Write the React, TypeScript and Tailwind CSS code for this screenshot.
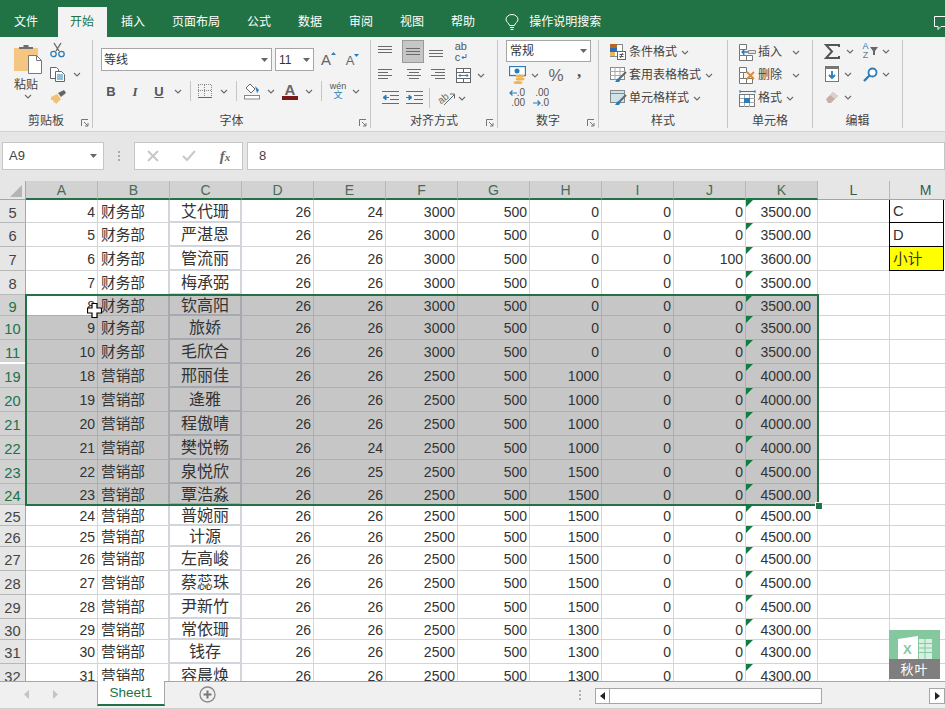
import type { ReactNode } from "react";

const cjk = "font-['Liberation_Sans','Noto_Sans_CJK_SC',sans-serif]";

const tabs = ["插入", "页面布局", "公式", "数据", "审阅", "视图", "帮助"];

type Row = { n: number; h: string; v: (string | number)[]; sel?: boolean; gap?: boolean };

const base = (a: number, dept: string, name: string, e: number, f: number, h: number, j: number, k: string) => [a, dept, name, 26, e, f, 500, h, 0, j, k];

const rows: Row[] = [
  { n: 5, h: "h-[23px]", v: base(4, "财务部", "艾代珊", 24, 3000, 0, 0, "3500.00") },
  { n: 6, h: "h-[24px]", v: base(5, "财务部", "严湛恩", 26, 3000, 0, 0, "3500.00") },
  { n: 7, h: "h-[24px]", v: base(6, "财务部", "管流丽", 26, 3000, 0, 100, "3600.00") },
  { n: 8, h: "h-[24px]", v: base(7, "财务部", "梅承弼", 26, 3000, 0, 0, "3500.00") },
  { n: 9, h: "h-[21px]", sel: true, v: base(8, "财务部", "钦高阳", 26, 3000, 0, 0, "3500.00") },
  { n: 10, h: "h-[24px]", sel: true, v: base(9, "财务部", "旅娇", 26, 3000, 0, 0, "3500.00") },
  { n: 11, h: "h-[24px]", sel: true, gap: true, v: base(10, "财务部", "毛欣合", 26, 3000, 0, 0, "3500.00") },
  { n: 19, h: "h-[24px]", sel: true, v: base(18, "营销部", "邢丽佳", 26, 2500, 1000, 0, "4000.00") },
  { n: 20, h: "h-[24px]", sel: true, v: base(19, "营销部", "逄雅", 26, 2500, 1000, 0, "4000.00") },
  { n: 21, h: "h-[24px]", sel: true, v: base(20, "营销部", "程傲晴", 26, 2500, 1000, 0, "4000.00") },
  { n: 22, h: "h-[24px]", sel: true, v: base(21, "营销部", "樊悦畅", 24, 2500, 1000, 0, "4000.00") },
  { n: 23, h: "h-[24px]", sel: true, v: base(22, "营销部", "泉悦欣", 25, 2500, 1500, 0, "4500.00") },
  { n: 24, h: "h-[21px]", sel: true, v: base(23, "营销部", "覃浩淼", 26, 2500, 1500, 0, "4500.00") },
  { n: 25, h: "h-[21px]", v: base(24, "营销部", "普婉丽", 26, 2500, 1500, 0, "4500.00") },
  { n: 26, h: "h-[21px]", v: base(25, "营销部", "计源", 26, 2500, 1500, 0, "4500.00") },
  { n: 27, h: "h-[24px]", v: base(26, "营销部", "左高峻", 26, 2500, 1500, 0, "4500.00") },
  { n: 28, h: "h-[24px]", v: base(27, "营销部", "蔡蕊珠", 26, 2500, 1500, 0, "4500.00") },
  { n: 29, h: "h-[24px]", v: base(28, "营销部", "尹新竹", 26, 2500, 1500, 0, "4500.00") },
  { n: 30, h: "h-[21px]", v: base(29, "营销部", "常依珊", 26, 2500, 1300, 0, "4300.00") },
  { n: 31, h: "h-[24px]", v: base(30, "营销部", "钱存", 26, 2500, 1300, 0, "4300.00") },
  { n: 32, h: "h-[24px]", v: base(31, "营销部", "容晨焕", 26, 2500, 1300, 0, "4300.00") },
];

function Chev({ className = "" }: { className?: string }) {
  return (
    <svg width="8" height="5" viewBox="0 0 8 5" className={className}>
      <path d="M1 1l3 3 3-3" fill="none" stroke="#6a6a6a" strokeWidth="1.1" />
    </svg>
  );
}

function Caret({ className = "" }: { className?: string }) {
  return (
    <svg width="7" height="4" viewBox="0 0 7 4" className={className}>
      <path d="M0 0h7L3.5 4z" fill="#666" />
    </svg>
  );
}

function Lines({ l, w = 16, h = 14 }: { l: [number, number, number][]; w?: number; h?: number }) {
  return (
    <svg width={w} height={h} viewBox={`0 0 ${w} ${h}`}>
      {l.map(([a, b, y], i) => (
        <path key={i} d={`M${a} ${y + 0.5}H${b}`} stroke="#6b6b6b" strokeWidth="1" />
      ))}
    </svg>
  );
}

function Launcher() {
  return (
    <svg width="8" height="8" viewBox="0 0 8 8" className="absolute right-[3px] bottom-[1px]">
      <path d="M.5 7V.5H7M3 3l4 4M4 7h3V4" fill="none" stroke="#777" strokeWidth="1" />
    </svg>
  );
}

function Group({ w, label, launcher, children }: { w: string; label: string; launcher?: boolean; children: ReactNode }) {
  return (
    <div className={`relative flex flex-col shrink-0 h-[88px] border-r border-[#c6c6c6] ${w}`}>
      <div className="flex-1 min-h-0">{children}</div>
      <div className="h-[14px] flex items-center justify-center text-[12px] leading-none text-[#444]">{label}</div>
      {launcher && <Launcher />}
    </div>
  );
}

function Slot({ w = "w-[24px]", children }: { w?: string; children: ReactNode }) {
  return <div className={`flex items-center justify-center shrink-0 ${w}`}>{children}</div>;
}

function Sep({ className = "" }: { className?: string }) {
  return <div className={`w-px h-[20px] bg-[#c6c6c6] shrink-0 ${className}`} />;
}

function PasteIcon() {
  return (
    <svg width="29" height="30" viewBox="0 0 29 30">
      <rect x="0" y="4" width="24" height="23" fill="#f5c681" />
      <path d="M5 5V3h4.500V1h5v2H19v2z" fill="#6f6f6f" />
      <path d="M14.500 11.500h8l5 5v13h-13z" fill="#fff" stroke="#777" />
      <path d="M22.500 11.500v5h5" fill="none" stroke="#777" />
    </svg>
  );
}

function ScissorsIcon() {
  return (
    <svg width="15" height="16" viewBox="0 0 15 16">
      <path d="M4 1l5 8M11 1L6 9" stroke="#6b6b6b" strokeWidth="1.4" fill="none" />
      <circle cx="3.500" cy="12" r="2.700" fill="none" stroke="#2b7cb8" strokeWidth="1.300" />
      <circle cx="11.500" cy="12" r="2.700" fill="none" stroke="#2b7cb8" strokeWidth="1.300" />
    </svg>
  );
}

function CopyIcon() {
  return (
    <svg width="16" height="15" viewBox="0 0 16 15">
      <path d="M.5.500h6l2 2v9h-8z" fill="#fff" stroke="#666" />
      <path d="M5.500 4.500h6l3 3v7h-9z" fill="#fff" stroke="#666" />
      <path d="M7 8h6M7 10h6M7 12h6" stroke="#2b7cb8" />
    </svg>
  );
}

function BrushIcon() {
  return (
    <svg width="17" height="15" viewBox="0 0 17 15">
      <path d="M1 7l6-3 4 5-5 5-1-2-1 1-1-3-2 0z" fill="#f3bf74" />
      <path d="M8 3l3 4 5-4-2-3z" fill="#666" />
    </svg>
  );
}

function BorderIcon() {
  return (
    <svg width="14" height="15" viewBox="0 0 14 15">
      <path d="M.5 1v11M6.500 1v11M13.500 1v11M0 .5h14M0 6.500h14" stroke="#8a8a8a" strokeDasharray="1 1" fill="none" />
      <path d="M0 13.500h14" stroke="#666" />
    </svg>
  );
}

function FillIcon() {
  return (
    <svg width="16" height="17" viewBox="0 0 16 17">
      <path d="M6 1l5 5-4 4-5-5z" fill="#fff" stroke="#666" />
      <path d="M11 3l4 4-2 3z" fill="#2b7cb8" />
      <rect x=".5" y="12.500" width="15" height="3.500" fill="#fff" stroke="#888" />
    </svg>
  );
}

function WrapIcon() {
  return (
    <div className="flex flex-col items-start leading-[11px] text-[11px] text-[#555] font-['Liberation_Sans']">
      <span>ab</span>
      <span className="flex items-center">
        c
        <svg width="6" height="6" viewBox="0 0 6 6" className="ml-px">
          <path d="M5 0v3.500H1M2.500 2L1 3.500 2.500 5" fill="none" stroke="#2b7cb8" />
        </svg>
      </span>
    </div>
  );
}

function MergeIcon() {
  return (
    <svg width="15" height="15" viewBox="0 0 15 15">
      <rect x=".5" y=".5" width="14" height="14" fill="#fff" stroke="#666" />
      <path d="M0 4.500h15M0 10.500h15M7.500 0v4M7.500 11v4" stroke="#666" />
      <path d="M3 7.500h9M4.500 6L3 7.500 4.500 9M10.500 6L12 7.500 10.500 9" stroke="#2b7cb8" fill="none" />
    </svg>
  );
}

function IndentIcon({ flip = false }: { flip?: boolean }) {
  return (
    <svg width="17" height="14" viewBox="0 0 17 14">
      <path d="M0 .5h17M8 4.500h9M8 8.500h9M0 12.500h17" stroke="#6b6b6b" />
      <path d={flip ? "M0 6.500h5M3 4l3 2.500L3 9z" : "M2 6.500h5M4 4L1 6.500 4 9z"} stroke="#2b7cb8" fill="#2b7cb8" />
    </svg>
  );
}

function OrientIcon() {
  return (
    <svg width="18" height="16" viewBox="0 0 18 16">
      <text x="1" y="12" fontSize="10" fill="#666" transform="rotate(-40 6 9)" fontFamily="Liberation Sans">ab</text>
      <path d="M7 15L17 5M13 4h4.500v4.500" stroke="#666" fill="none" />
    </svg>
  );
}

function MoneyIcon() {
  return (
    <svg width="17" height="19" viewBox="0 0 17 19">
      <rect x=".5" y=".5" width="16" height="9" fill="#fff" stroke="#2b7cb8" strokeWidth="1.300" />
      <circle cx="8" cy="5" r="2.500" fill="#2b7cb8" />
      <ellipse cx="11" cy="10" rx="4.500" ry="1.500" fill="#f0b455" />
      <ellipse cx="11" cy="13" rx="4.500" ry="1.500" fill="#f0b455" />
      <ellipse cx="9" cy="16.500" rx="4.500" ry="1.500" fill="#f0b455" />
    </svg>
  );
}

function DecimalIcon({ more = false }: { more?: boolean }) {
  const cls = "text-[10px] leading-[10px] text-[#555] font-['Liberation_Sans']";
  return more ? (
    <div className={`flex flex-col items-end ${cls}`}>
      <span>.00</span>
      <span className="flex items-center">
        <svg width="8" height="6" viewBox="0 0 8 6"><path d="M0 3h7M4.500.5L7 3 4.500 5.500" fill="none" stroke="#2b7cb8" strokeWidth="1.200" /></svg>
        .0
      </span>
    </div>
  ) : (
    <div className={`flex flex-col items-end ${cls}`}>
      <span className="flex items-center">
        <svg width="8" height="6" viewBox="0 0 8 6"><path d="M8 3H1M3.500.5L1 3l2.500 2.500" fill="none" stroke="#2b7cb8" strokeWidth="1.200" /></svg>
        .0
      </span>
      <span>.00</span>
    </div>
  );
}

function CondIcon() {
  return (
    <svg width="16" height="16" viewBox="0 0 16 16">
      <rect x=".5" y=".5" width="12" height="12" fill="#fff" stroke="#888" />
      <rect x="0" y="0" width="7" height="4" fill="#b4691f" />
      <rect x="0" y="4" width="7" height="4" fill="#2b6cb8" />
      <rect x="0" y="8" width="5" height="4" fill="#f0b455" />
      <rect x="7.500" y="7.500" width="8" height="8" fill="#fff" stroke="#666" />
      <path d="M9.500 10.500h4M9.500 12.500h4M12.500 9l-2 5" stroke="#555" />
    </svg>
  );
}

function TableIcon({ plain = false }: { plain?: boolean }) {
  return (
    <svg width="17" height="17" viewBox="0 0 17 17">
      <rect x=".5" y=".5" width="14" height="12" fill={plain ? "#cfe3ea" : "#fff"} stroke="#888" />
      {!plain && <path d="M5 0v13M10 0v13M0 4.500h15M0 8.500h15" stroke="#aaa" />}
      {plain && <path d="M0 3.500h15" stroke="#888" />}
      <path d="M16 5l-6 6" stroke="#666" strokeWidth="2" />
      <path d="M7 12l3-2 1 2-2 3H5z" fill="#2b7cb8" />
    </svg>
  );
}

function CellOpIcon({ kind }: { kind: "ins" | "del" }) {
  return (
    <svg width="17" height="17" viewBox="0 0 17 17">
      <path d="M.5.500h7v5h-7zM.5 11.500h7v5h-7zM7.500 11.500h6v5h-6z" fill="#fff" stroke="#777" />
      <path d="M.5 5.500h4v6h-4z" fill="#fff" stroke="#777" />
      {kind === "ins" ? (
        <>
          <path d="M9.500 6.500h7v3h-7z" fill="#dfe7ee" stroke="#888" />
          <path d="M9 8H3M5.500 5.500L3 8l2.500 2.500" stroke="#2b7cb8" strokeWidth="1.300" fill="none" />
        </>
      ) : (
        <path d="M8 5l7 7M15 5l-7 7" stroke="#d98b3a" strokeWidth="1.800" />
      )}
    </svg>
  );
}

function FormatIcon() {
  return (
    <svg width="17" height="17" viewBox="0 0 17 17">
      <path d="M1 1.500h15M1 0v3M16 0v3" stroke="#2b7cb8" />
      <rect x=".5" y="4.500" width="15" height="12" fill="#fff" stroke="#777" />
      <path d="M5.500 5v12M10.500 5v12M1 8.500h15M1 12.500h15" stroke="#aaa" />
      <rect x="5" y="8" width="6" height="5" fill="#2b7cb8" />
    </svg>
  );
}

function SigmaIcon() {
  return (
    <svg width="16" height="15" viewBox="0 0 16 15">
      <path d="M15 3V1H2l6 6.500L2 14h13v-2" fill="none" stroke="#555" strokeWidth="2" />
    </svg>
  );
}

function SortIcon() {
  return (
    <div className="flex items-center">
      <div className="flex flex-col items-center leading-[9px] text-[9px] font-['Liberation_Sans']">
        <span className="text-[#2b7cb8]">A</span>
        <span className="text-[#777]">Z</span>
      </div>
      <svg width="8" height="8" viewBox="0 0 8 8" className="ml-px">
        <path d="M0 0h8L5 4v4H3V4z" fill="#666" />
      </svg>
    </div>
  );
}

function FillDownIcon() {
  return (
    <svg width="14" height="16" viewBox="0 0 14 16">
      <rect x=".5" y=".5" width="13" height="15" fill="#fff" stroke="#777" />
      <rect x="0" y="0" width="14" height="3" fill="#777" />
      <path d="M7 5v7M4 9l3 3 3-3" stroke="#2b7cb8" strokeWidth="1.800" fill="none" />
    </svg>
  );
}

function FindIcon() {
  return (
    <svg width="15" height="15" viewBox="0 0 15 15">
      <circle cx="9.500" cy="5.500" r="4" fill="#fff" stroke="#2b7cb8" strokeWidth="1.800" />
      <path d="M6.500 8.500L1 14" stroke="#2b7cb8" strokeWidth="2.400" />
    </svg>
  );
}

function EraserIcon() {
  return (
    <svg width="14" height="13" viewBox="0 0 14 13">
      <path d="M1 8l7-7 5 4-7 7H3z" fill="#c9aea6" />
      <path d="M8 1l5 4-3 3-5-4z" fill="#ddd0cc" />
    </svg>
  );
}

function Ribbon() {
  return (
    <div className={`flex h-[95px] pt-[3px] bg-[#f3f3f3] border-b border-[#d2d2d2] overflow-hidden ${cjk}`}>
      <Group w="w-[93px]" label="剪贴板" launcher>
        <div className="flex">
          <div className="ml-[14px] w-[29px] flex flex-col items-start pt-[4px]">
            <PasteIcon />
            <span className="mt-[4px] text-[12px] leading-[14px] text-[#444]">粘贴</span>
            <Chev className="ml-[10px] mt-[2px]" />
          </div>
          <div className="ml-[7px] flex flex-col items-start pt-[2px]">
            <ScissorsIcon />
            <div className="flex items-center mt-[9px]">
              <CopyIcon />
              <Chev className="ml-[7px]" />
            </div>
            <div className="mt-[8px]"><BrushIcon /></div>
          </div>
        </div>
      </Group>

      <Group w="w-[278px]" label="字体" launcher>
        <div className="flex items-center mt-[8px] ml-[8px]">
          <div className="flex items-center justify-between w-[171px] h-[23px] bg-white border border-[#a6a6a6] pl-[2px] pr-[3px] text-[12px] text-[#333]">
            等线
            <Caret />
          </div>
          <div className="flex items-center justify-between ml-[3px] w-[39px] h-[23px] bg-white border border-[#a6a6a6] pl-[3px] pr-[3px] text-[12px] text-[#333]">
            11
            <Caret />
          </div>
          <div className="ml-[3px] flex items-start w-[23px] justify-center text-[15px] leading-none text-[#666] font-['Liberation_Sans']">
            A
            <svg width="5" height="3" viewBox="0 0 5 3"><path d="M0 3h5L2.500 0z" fill="#2b7cb8" /></svg>
          </div>
          <div className="flex items-start w-[25px] justify-center text-[13px] leading-none text-[#666] font-['Liberation_Sans'] pt-[2px]">
            A
            <svg width="5" height="3" viewBox="0 0 5 3"><path d="M0 0h5L2.500 3z" fill="#2b7cb8" /></svg>
          </div>
        </div>
        <div className="flex items-center mt-[10px] ml-[6px] h-[20px] font-['Liberation_Sans'] text-[#555]">
          <Slot><b className="text-[13px] leading-none">B</b></Slot>
          <Slot><i className="text-[13px] leading-none font-['Liberation_Serif'] font-bold">I</i></Slot>
          <Slot><span className="text-[13px] leading-none font-bold underline">U</span></Slot>
          <Slot w="w-[14px]"><Chev /></Slot>
          <Sep className="ml-[5px]" />
          <div className="ml-[2px]"><Slot><BorderIcon /></Slot></div>
          <Slot w="w-[14px]"><Chev /></Slot>
          <Sep className="ml-[5px]" />
          <div className="ml-[3px]"><Slot><FillIcon /></Slot></div>
          <Slot w="w-[14px]"><Chev /></Slot>
          <Slot>
            <div className="flex flex-col items-center">
              <span className="text-[15px] leading-[13px] font-bold text-[#666]">A</span>
              <div className="w-[16px] h-[4px] bg-[#7b1818]" />
            </div>
          </Slot>
          <Slot w="w-[14px]"><Chev /></Slot>
          <Sep className="ml-[5px]" />
          <div className="ml-[4px]">
            <Slot>
              <div className="flex flex-col items-center">
                <span className="text-[9px] leading-[9px] text-[#555]">wén</span>
                <span className={`text-[9px] leading-[9px] text-[#2b7cb8] ${cjk}`}>文</span>
              </div>
            </Slot>
          </div>
          <Slot w="w-[12px]"><Chev /></Slot>
        </div>
      </Group>

      <Group w="w-[127px]" label="对齐方式" launcher>
        <div className="flex items-center ml-[2px] h-[23px]">
          <Slot><div className="-mt-[4px]"><Lines l={[[1, 15, 3], [1, 15, 6], [1, 15, 9]]} /></div></Slot>
          <div className="ml-[5px] flex items-center justify-center w-[22px] h-[23px] bg-[#c6c6c6] border border-[#9a9a9a]">
            <Lines l={[[1, 15, 3], [1, 15, 6], [1, 15, 9]]} />
          </div>
          <Slot><div className="mt-[5px]"><Lines l={[[1, 15, 3], [1, 15, 6], [1, 15, 9]]} /></div></Slot>
          <div className="ml-[1px]"><Slot><WrapIcon /></Slot></div>
        </div>
        <div className="flex items-center ml-[2px] mt-[2px] h-[20px]">
          <Slot><Lines l={[[1, 15, 1], [1, 11, 4], [1, 15, 7], [1, 11, 10]]} /></Slot>
          <div className="ml-[5px]"><Slot><Lines l={[[1, 15, 1], [3, 13, 4], [1, 15, 7], [3, 13, 10]]} /></Slot></div>
          <Slot><Lines l={[[1, 15, 1], [5, 15, 4], [1, 15, 7], [5, 15, 10]]} /></Slot>
          <div className="ml-[1px]"><Slot><MergeIcon /></Slot></div>
          <Slot w="w-[12px]"><Chev /></Slot>
        </div>
        <div className="flex items-center ml-[7px] mt-[3px] h-[20px]">
          <Slot><IndentIcon /></Slot>
          <Slot><IndentIcon flip /></Slot>
          <Sep className="ml-[3px]" />
          <div className="ml-[4px]"><Slot><OrientIcon /></Slot></div>
          <Slot w="w-[8px]"><Chev /></Slot>
        </div>
      </Group>

      <Group w="w-[101px]" label="数字" launcher>
        <div className="flex items-center justify-between ml-[8px] w-[85px] h-[22px] bg-white border border-[#a6a6a6] pl-[3px] pr-[3px] text-[12px] text-[#333]">
          常规
          <Caret />
        </div>
        <div className="flex items-center ml-[7px] mt-[3px] h-[20px]">
          <Slot><MoneyIcon /></Slot>
          <Slot w="w-[12px]"><Chev /></Slot>
          <div className="ml-[3px]">
            <Slot><span className="text-[17px] leading-none text-[#666] font-['Liberation_Sans']">%</span></Slot>
          </div>
          <Slot w="w-[22px]"><span className="-mt-[8px] text-[17px] leading-none font-bold text-[#555] font-['Liberation_Serif']">,</span></Slot>
        </div>
        <div className="flex items-center ml-[7px] mt-[3px] h-[20px]">
          <Slot><DecimalIcon /></Slot>
          <Slot><DecimalIcon more /></Slot>
        </div>
      </Group>

      <Group w="w-[129px]" label="样式">
        <div className="flex flex-col gap-[3px] pl-[11px] pt-[2px] text-[12px] text-[#444]">
          <div className="flex items-center h-[20px]"><div className="w-[16px]"><CondIcon /></div><span className="ml-[3px]">条件格式</span><Chev className="ml-[4px]" /></div>
          <div className="flex items-center h-[20px]"><div className="w-[16px]"><TableIcon /></div><span className="ml-[3px]">套用表格格式</span><Chev className="ml-[4px]" /></div>
          <div className="flex items-center h-[20px]"><div className="w-[16px]"><TableIcon plain /></div><span className="ml-[3px]">单元格样式</span><Chev className="ml-[4px]" /></div>
        </div>
      </Group>

      <Group w="w-[85px]" label="单元格">
        <div className="flex flex-col gap-[3px] pl-[11px] pt-[2px] text-[12px] text-[#444]">
          <div className="flex items-center h-[20px]"><CellOpIcon kind="ins" /><span className="ml-[2px]">插入</span><Chev className="ml-[10px]" /></div>
          <div className="flex items-center h-[20px]"><CellOpIcon kind="del" /><span className="ml-[2px]">删除</span><Chev className="ml-[10px]" /></div>
          <div className="flex items-center h-[20px]"><FormatIcon /><span className="ml-[2px]">格式</span><Chev className="ml-[4px]" /></div>
        </div>
      </Group>

      <Group w="w-[90px]" label="编辑">
        <div className="flex flex-col gap-[3px] pl-[9px] pt-[1px]">
          <div className="flex items-center h-[20px]">
            <Slot w="w-[20px]"><SigmaIcon /></Slot><Chev className="ml-[4px]" />
            <div className="ml-[7px]"><Slot w="w-[18px]"><SortIcon /></Slot></div><Chev className="ml-[3px]" />
          </div>
          <div className="flex items-center h-[20px]">
            <Slot w="w-[20px]"><FillDownIcon /></Slot><Chev className="ml-[2px]" />
            <div className="ml-[9px]"><Slot w="w-[18px]"><FindIcon /></Slot></div><Chev className="ml-[3px]" />
          </div>
          <div className="flex items-center h-[20px]">
            <Slot w="w-[20px]"><EraserIcon /></Slot><Chev className="ml-[2px]" />
          </div>
        </div>
      </Group>
    </div>
  );
}

function FormulaBar() {
  return (
    <div className="flex items-start h-[49px] pt-[10px] bg-[#e6e6e6] font-['Liberation_Sans']">
      <div className="ml-[2px] flex items-center justify-between w-[102px] h-[28px] bg-white border border-[#c6c6c6] pl-[6px] pr-[6px] text-[13px] text-[#444]">
        A9
        <Caret />
      </div>
      <div className="w-[30px] h-[28px] flex flex-col items-center justify-center gap-[2px]">
        <div className="w-[2px] h-[2px] bg-[#aaa]" />
        <div className="w-[2px] h-[2px] bg-[#aaa]" />
        <div className="w-[2px] h-[2px] bg-[#aaa]" />
      </div>
      <div className="flex items-center w-[109px] h-[28px] bg-white border border-[#c6c6c6]">
        <Slot w="w-[36px]">
          <svg width="12" height="12" viewBox="0 0 12 12"><path d="M1 1l10 10M11 1L1 11" stroke="#c8c8c8" strokeWidth="2" /></svg>
        </Slot>
        <Slot w="w-[36px]">
          <svg width="14" height="12" viewBox="0 0 14 12"><path d="M1 6l4 4 8-9" fill="none" stroke="#c8c8c8" strokeWidth="2" /></svg>
        </Slot>
        <Slot w="w-[36px]"><span className="text-[15px] italic font-bold text-[#666] font-['Liberation_Serif']">f<span className="text-[11px]">x</span></span></Slot>
      </div>
      <div className="ml-[4px] flex-1 flex items-center h-[28px] bg-white border border-[#c6c6c6] pl-[11px] text-[13px] text-[#444]">8</div>
    </div>
  );
}

const cols = ["A", "B", "C", "D", "E", "F", "G", "H", "I", "J", "K", "L", "M"];

function Cell({ idx, val, sel, active, short }: { idx: number; val: string | number; sel?: boolean; active?: boolean; short?: boolean }) {
  const bg = active ? "bg-white" : sel ? "bg-[#c6c6c6]" : "bg-white";
  const line = sel ? "border-[#aeaeae]" : "border-[#d4d4d4]";
  const top = short ? "pt-[1px]" : "pt-[2px]";
  if (idx === 1) {
    return <div className={`flex items-start pl-[3px] border-r border-b overflow-hidden whitespace-nowrap text-[14.67px] leading-[21px] text-[#333] ${top} ${bg} ${line}`}>{val}</div>;
  }
  if (idx === 2) {
    const thick = sel ? "border-[#a6aab0]" : "border-[#d2d6dc]";
    return <div className={`-ml-[2px] flex items-start justify-center ${short ? "pt-0" : "pt-[1px]"} border-l-2 border-r-2 border-b-2 overflow-hidden whitespace-nowrap text-[16px] leading-[21px] text-[#333] ${sel ? "bg-[#c6c6c6]" : "bg-white"} ${thick}`}>{val}</div>;
  }
  if (idx === 10) {
    return (
      <div className={`relative flex items-start justify-end pr-[6px] border-r border-b overflow-hidden text-[14px] leading-[20px] text-[#333] ${top} ${bg} ${line}`}>
        <div className="absolute left-0 top-0 w-[7px] h-[7px] bg-[#107c41] [clip-path:polygon(0_0,100%_0,0_100%)]" />
        {val}
      </div>
    );
  }
  return <div className={`flex items-start justify-end pr-[2px] border-r border-b overflow-hidden text-[14px] leading-[20px] text-[#333] ${top} ${bg} ${line}`}>{val}</div>;
}

function Sheet() {
  return (
    <div className={`relative h-[500px] overflow-hidden bg-white ${cjk}`}>
      <div className="grid grid-cols-[26px_repeat(13,72px)] h-[19px]">
        <div className="flex items-end justify-end pr-[3px] pb-[2px] bg-[#e6e6e6] border-r border-[#a6a6a6] border-b border-b-[#a6a6a6]">
          <div className="w-[12px] h-[12px] bg-[#b4b4b4] [clip-path:polygon(100%_0,100%_100%,0_100%)]" />
        </div>
        {cols.map((c, i) => (
          <div
            key={c}
            className={
              i < 11
                ? "flex items-center justify-center bg-[#d2d2d2] border-r border-[#b8b8b8] border-b-2 border-b-[#217346] text-[14px] leading-none text-[#4a6a58]"
                : "flex items-center justify-center bg-[#e6e6e6] border-r border-[#b8b8b8] border-b border-b-[#a6a6a6] text-[14px] leading-none text-[#2f5f48]"
            }
          >
            {c}
          </div>
        ))}
      </div>
      {rows.map((r) => (
        <div key={r.n} className={`grid grid-cols-[26px_repeat(13,72px)] ${r.h}`}>
          <div
            className={`flex items-start justify-center overflow-hidden border-r border-r-[#a6a6a6] text-[14.67px] leading-[20px] ${r.h === "h-[21px]" ? "pt-[2px]" : "pt-[3px]"} ${
              r.sel ? "bg-[#d2d2d2] text-[#217346]" : "bg-[#e6e6e6] text-[#444]"
            } ${r.gap ? "border-b-2 border-b-white" : "border-b border-b-[#b8b8b8]"}`}
          >
            {r.n}
          </div>
          {r.v.map((v, i) => (
            <Cell key={i} idx={i} val={v} sel={r.sel} active={r.n === 9 && i === 0} short={r.h === "h-[21px]"} />
          ))}
          <div className="border-r border-b border-[#d4d4d4]" />
          {r.n === 5 || r.n === 6 || r.n === 7 ? (
            <div className={`flex items-center w-[55px] pl-[3px] -ml-px border border-t-0 border-black text-[14.67px] text-[#333] ${r.n === 7 ? "bg-[#ffff00]" : "bg-white"}`}>
              {r.n === 5 ? "C" : r.n === 6 ? "D" : "小计"}
            </div>
          ) : (
            <div className="border-b border-[#d4d4d4]" />
          )}
        </div>
      ))}

      {/* selection frame */}
      <div className="absolute left-[25px] top-[113px] w-[794px] h-[212px] border-2 border-[#217346] pointer-events-none" />
      <div className="absolute left-[815px] top-[321px] w-[6px] h-[6px] bg-[#217346] border border-white box-content" />

      {/* mouse cursor */}
      <svg width="15" height="15" viewBox="0 0 15 15" className="absolute left-[87px] top-[122px]">
        <path d="M5 .5h5v4.500h4.500v5H10v4.500H5V10H.5V5H5z" fill="#fff" stroke="#000" strokeWidth="1.200" />
      </svg>

      {/* watermark */}
      <div className="absolute left-[889px] top-[449px] w-[51px] h-[49px] flex flex-col">
        <div className="h-[29px] bg-[#85c8a0] flex items-end justify-center pb-0">
          <svg width="34" height="23" viewBox="0 0 34 23">
            <path d="M0 3L20 0v23H0z" fill="#fff" />
            <path d="M21 3h13v20H21z" fill="#d8f0e2" />
            <path d="M21 7.500h13M21 12h13M21 16.500h13M27 3v20" stroke="#85c8a0" />
            <text x="5" y="18" fontSize="13" fontWeight="bold" fill="#85c8a0" fontFamily="Liberation Sans">X</text>
          </svg>
        </div>
        <div className="flex-1 bg-[#7f7f7f] flex items-center justify-center text-[13px] leading-none tracking-[1px] text-white">秋叶</div>
      </div>
    </div>
  );
}

function Footer() {
  return (
    <div className={`h-[28px] bg-[#f0f0f0] border-t border-b border-t-[#a6a6a6] border-b-[#d0d0d0] flex items-start ${cjk}`}>
      <svg width="5" height="9" viewBox="0 0 5 9" className="ml-[24px] mt-[8px]"><path d="M5 0v9L0 4.500z" fill="#c4c4c4" /></svg>
      <svg width="5" height="9" viewBox="0 0 5 9" className="ml-[24px] mt-[8px]"><path d="M0 0v9l5-4.500z" fill="#c4c4c4" /></svg>
      <div className="ml-[39px] -mt-px flex items-center justify-center w-[68px] h-[25px] bg-white border-x border-[#a6a6a6] border-b-2 border-b-[#217346] text-[13.5px] leading-none text-[#217346]">Sheet1</div>
      <svg width="17" height="17" viewBox="0 0 17 17" className="ml-[34px] mt-[4px]">
        <circle cx="8.500" cy="8.500" r="7.500" fill="none" stroke="#8a8a8a" strokeWidth="1.300" />
        <path d="M8.500 4.500v8M4.500 8.500h8" stroke="#777" strokeWidth="2" />
      </svg>
      <div className="ml-[363px] mt-[8px] flex flex-col gap-[2px]">
        <div className="w-[2px] h-[2px] bg-[#b0b0b0]" />
        <div className="w-[2px] h-[2px] bg-[#b0b0b0]" />
        <div className="w-[2px] h-[2px] bg-[#b0b0b0]" />
      </div>
      <div className="ml-[14px] mt-[6px] flex h-[16px] flex-1">
        <div className="w-[15px] bg-white border border-[#a6a6a6] flex items-center justify-center">
          <svg width="5" height="8" viewBox="0 0 5 8"><path d="M5 0v8L0 4z" fill="#222" /></svg>
        </div>
        <div className="w-[212px] bg-white border-y border-r border-[#a6a6a6]" />
        <div className="flex-1" />
        <div className="w-[16px] bg-white border border-[#a6a6a6] flex items-center justify-center">
          <svg width="5" height="8" viewBox="0 0 5 8"><path d="M0 0v8l5-4z" fill="#222" /></svg>
        </div>
      </div>
    </div>
  );
}

export default function App() {
  return (
    <div className={`w-[945px] h-[709px] overflow-hidden bg-[#e6e6e6] ${cjk}`}>
      <div className="flex items-end h-[37px] bg-[#217346] text-[12px] text-white">
        <div className="ml-[2px] px-3 h-[30px] flex items-center">文件</div>
        <div className="ml-[8px] px-3 w-[49px] h-[30px] flex items-center bg-[#f3f3f3] text-[#217346]">开始</div>
        <div className="ml-[2px] flex gap-[3px]">
          {tabs.map((t) => (
            <div key={t} className="px-3 h-[30px] flex items-center">{t}</div>
          ))}
        </div>
        <div className="ml-[18px] h-[30px] flex items-center">
          <svg width="14" height="17" viewBox="0 0 14 17">
            <path d="M4.500 11.500C4 9 1 8 1 5.500a6 5 0 0 1 12 0C13 8 10 9 9.500 11.500z" fill="none" stroke="#fff" />
            <path d="M5 13.500h4M5.500 15.500h3" stroke="#fff" />
          </svg>
        </div>
        <div className="ml-[10px] h-[30px] flex items-center">操作说明搜索</div>
        <div className="ml-auto h-[30px] flex items-center">
          <svg width="11" height="15" viewBox="0 0 11 15"><path d="M11 1.500H.5v10H4v3l3-3h4" fill="none" stroke="#fff" /></svg>
        </div>
      </div>
      <Ribbon />
      <FormulaBar />
      <Sheet />
      <Footer />
    </div>
  );
}
